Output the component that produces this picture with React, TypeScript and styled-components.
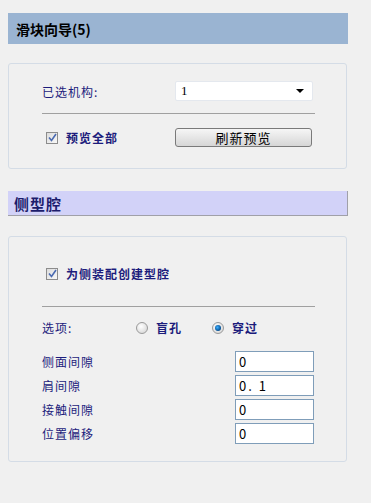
import styled, { createGlobalStyle } from "styled-components";

const GlobalStyle = createGlobalStyle`
  html, body {
    margin: 0;
    padding: 0;
    background: #f0f0f0;
  }
  body {
    font-family: "Noto Sans CJK SC", "DejaVu Sans", sans-serif;
    font-size: 12px;
  }
`;

const Page = styled.div`
  width: 340px;
  padding: 13px 0 0 8px;
  display: flex;
  flex-direction: column;
`;

const TitleBar = styled.div`
  height: 31px;
  padding-left: 8px;
  display: flex;
  align-items: center;

  background-color: #9ab4d2;
  color: #000;
  font-size: 14px;
  font-weight: bold;
`;

const SectionBar = styled.div`
  margin-top: 22px;
  height: 24px;
  padding-left: 6px;
  display: flex;
  align-items: center;

  background-color: #d2d2f8;
  border-bottom: 1px solid #a0a0a8;
  border-right: 1px solid #a0a0a8;
  color: #1c1c6c;
  font-size: 15px;
  font-weight: bold;
  letter-spacing: 1px;
`;

const Panel = styled.div<{ $top: number; $height: number }>`
  margin-top: ${(p) => p.$top}px;
  height: ${(p) => p.$height}px;
  box-sizing: border-box;
  width: 339px;
  padding: 0 33px 0 33px;
  border: 1px solid #d4dce6;
  border-radius: 3px;
  display: flex;
  flex-direction: column;
`;

const Row = styled.div<{ $top: number }>`
  margin-top: ${(p) => p.$top}px;
  display: flex;
  align-items: center;
`;

const Label = styled.span<{ $width?: number; $bold?: boolean }>`
  width: ${(p) => (p.$width ? `${p.$width}px` : "auto")};
  color: #1c1c7c;
  font-weight: ${(p) => (p.$bold ? "bold" : "normal")};
  letter-spacing: 1px;
`;

const Select = styled.div`
  width: 139px;
  height: 20px;
  box-sizing: border-box;
  padding: 0 8px 0 5px;
  display: flex;
  align-items: center;
  justify-content: space-between;

  background: #fff;
  border: 1px solid #e4e8ee;
  border-radius: 2px;
  font-family: "Liberation Serif", serif;
  font-size: 13px;
  color: #000;
`;

const Arrow = styled.span`
  width: 0;
  height: 0;
  border-left: 4px solid transparent;
  border-right: 4px solid transparent;
  border-top: 4px solid #000;
`;

const Divider = styled.div<{ $top: number }>`
  margin-top: ${(p) => p.$top}px;
  height: 1px;
  width: 273px;
  background: #a0a0a0;
`;

const Check = styled.span`
  width: 12px;
  height: 12px;
  box-sizing: border-box;
  margin: 0 8px 0 4px;
  border: 1px solid #8c8c8c;
  background: linear-gradient(135deg, #dcdcdc, #f8f8f8);
  display: inline-flex;
  align-items: center;
  justify-content: center;
`;

const Button = styled.div`
  margin-left: auto;
  margin-right: 1px;
  width: 137px;
  height: 19px;
  box-sizing: border-box;
  display: flex;
  align-items: center;
  justify-content: center;

  background: linear-gradient(#f6f6f6, #e6e6e6 50%, #d6d6d6);
  border: 1px solid #7a7a7a;
  border-radius: 3px;
  color: #000;
  font-size: 13px;
  letter-spacing: 1px;
`;

const Radio = styled.span<{ $on?: boolean }>`
  width: 12px;
  height: 12px;
  box-sizing: border-box;
  border-radius: 50%;
  border: 1px solid #9a9a9a;
  background: radial-gradient(circle at 40% 35%, #fff, #d0d0d0);
  display: inline-flex;
  align-items: center;
  justify-content: center;
  margin-right: 8px;

  &::after {
    content: "";
    display: ${(p) => (p.$on ? "block" : "none")};
    width: 6px;
    height: 6px;
    border-radius: 50%;
    background: radial-gradient(circle at 40% 40%, #3fb0ff, #0a5aa0 60%, #083060);
  }
`;

const Fields = styled.div`
  margin-top: 15px;
  display: grid;
  grid-template-columns: 193px 79px;
  grid-auto-rows: 21px;
  row-gap: 3px;
  align-items: center;
`;

const Input = styled.div`
  height: 21px;
  box-sizing: border-box;
  padding-left: 3px;
  display: flex;
  align-items: center;

  background: #fff;
  border: 1px solid #7f9db9;
  font-family: "Noto Sans CJK SC", monospace;
  font-size: 13px;
  color: #000;
  letter-spacing: 2px;
`;

const CheckMark = () => (
  <svg width="9" height="9" viewBox="0 0 9 9">
    <path d="M1 4.5 L3.5 7.5 L8 1" fill="none" stroke="#4a6ab0" strokeWidth="1.6" />
  </svg>
);

const fields: [string, string][] = [
  ["侧面间隙", "0"],
  ["肩间隙", "0. 1"],
  ["接触间隙", "0"],
  ["位置偏移", "0"],
];

const App = () => (
  <>
    <GlobalStyle />
    <Page>
      <TitleBar>滑块向导(5)</TitleBar>
      <Panel $top={19} $height={106}>
        <Row $top={17}>
          <Label $width={134}>已选机构:</Label>
          <Select>
            1<Arrow />
          </Select>
        </Row>
        <Divider $top={12} />
        <Row $top={14}>
          <Check>
            <CheckMark />
          </Check>
          <Label $bold>预览全部</Label>
          <Button>刷新预览</Button>
        </Row>
      </Panel>

      <SectionBar>侧型腔</SectionBar>
      <Panel $top={20} $height={226}>
        <Row $top={28}>
          <Check>
            <CheckMark />
          </Check>
          <Label $bold>为侧装配创建型腔</Label>
        </Row>
        <Divider $top={24} />
        <Row $top={12}>
          <Label $width={94}>选项:</Label>
          <Radio />
          <Label $bold $width={56}>盲孔</Label>
          <Radio $on />
          <Label $bold>穿过</Label>
        </Row>
        <Fields>
          {fields.map(([name, value]) => (
            <>
              <Label key={name}>{name}</Label>
              <Input key={name + "v"}>{value}</Input>
            </>
          ))}
        </Fields>
      </Panel>
    </Page>
  </>
);

export default App;
